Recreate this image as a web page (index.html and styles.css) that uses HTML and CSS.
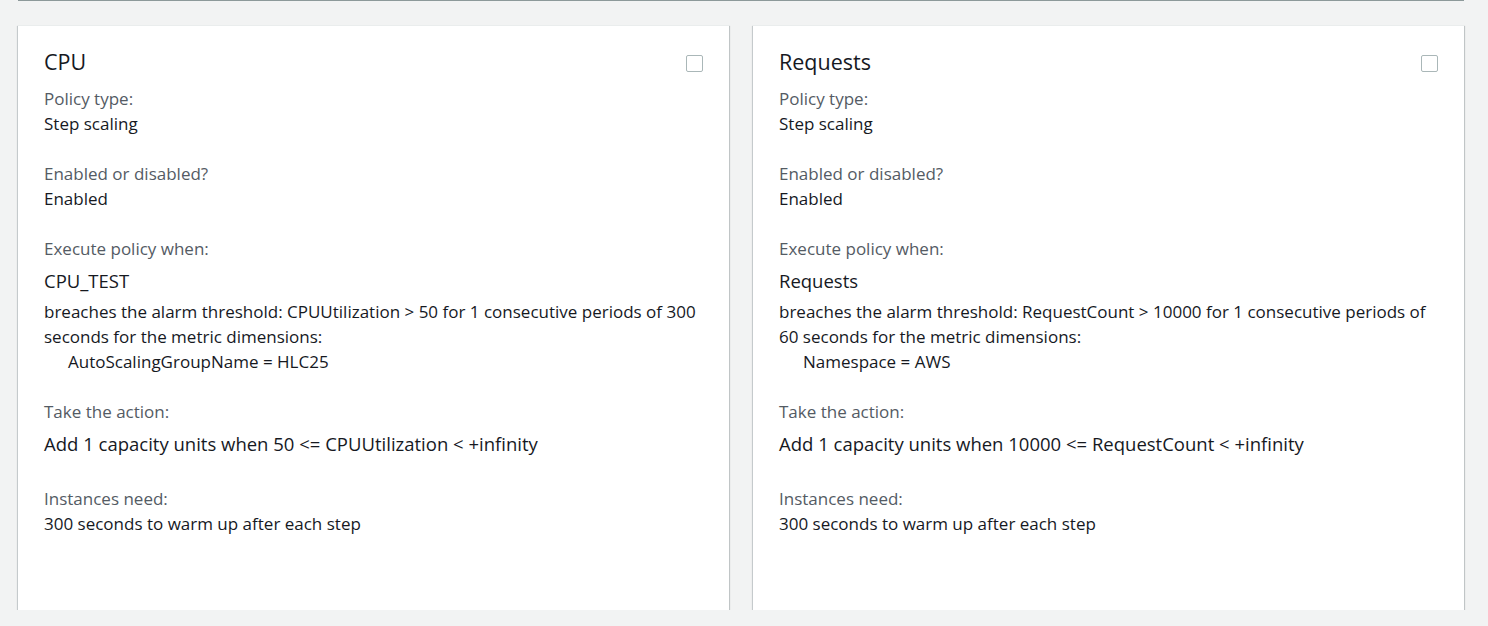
FILE: index.html
```html
<!DOCTYPE html>
<html lang="en">
<head>
<meta charset="utf-8">
<title>Scaling policies</title>
<link rel="stylesheet" href="styles.css">
</head>
<body>
<div class="page">
  <div class="prev-edge"></div>
  <div class="cards">
    <section class="card">
      <header class="card-head">
        <h2 class="card-title">CPU</h2>
        <span class="checkbox" role="checkbox" aria-checked="false"></span>
      </header>
      <div class="field">
        <div class="label">Policy type:</div>
        <div class="value">Step scaling</div>
      </div>
      <div class="field">
        <div class="label">Enabled or disabled?</div>
        <div class="value">Enabled</div>
      </div>
      <div class="field">
        <div class="label">Execute policy when:</div>
        <div class="alarm">CPU_TEST</div>
        <div class="desc">breaches the alarm threshold: CPUUtilization &gt; 50 for 1 consecutive periods of 300 seconds for the metric dimensions:
          <div class="dim">AutoScalingGroupName = HLC25</div>
        </div>
      </div>
      <div class="field">
        <div class="label">Take the action:</div>
        <div class="action">Add 1 capacity units when 50 &lt;= CPUUtilization &lt; +infinity</div>
      </div>
      <div class="field">
        <div class="label">Instances need:</div>
        <div class="value">300 seconds to warm up after each step</div>
      </div>
    </section>
    <section class="card">
      <header class="card-head">
        <h2 class="card-title">Requests</h2>
        <span class="checkbox" role="checkbox" aria-checked="false"></span>
      </header>
      <div class="field">
        <div class="label">Policy type:</div>
        <div class="value">Step scaling</div>
      </div>
      <div class="field">
        <div class="label">Enabled or disabled?</div>
        <div class="value">Enabled</div>
      </div>
      <div class="field">
        <div class="label">Execute policy when:</div>
        <div class="alarm">Requests</div>
        <div class="desc">breaches the alarm threshold: RequestCount &gt; 10000 for 1 consecutive periods of 60 seconds for the metric dimensions:
          <div class="dim">Namespace = AWS</div>
        </div>
      </div>
      <div class="field">
        <div class="label">Take the action:</div>
        <div class="action">Add 1 capacity units when 10000 &lt;= RequestCount &lt; +infinity</div>
      </div>
      <div class="field">
        <div class="label">Instances need:</div>
        <div class="value">300 seconds to warm up after each step</div>
      </div>
    </section>
  </div>
</div>
</body>
</html>
```
FILE: styles.css
```css
html, body {
  margin: 0;
  padding: 0;
  background: #f2f3f3;
}
body {
  font-family: "Open Sans", "Noto Sans", sans-serif;
  font-size: 17px;
  line-height: 25px;
  color: #16191f;
}
.page {
  padding: 0 24px 0 18px;
}
.prev-edge {
  height: 1px;
  background: #8d999a;
}
.cards {
  display: grid;
  grid-template-columns: 1fr 1fr;
  gap: 24px;
  margin-top: 24px;
}
.card {
  background: #ffffff;
  min-height: 585px;
  box-sizing: border-box;
  padding: 21px 26px 30px 26px;
  border-top: 1px solid #eaeded;
  box-shadow: 0 1px 1px 0 rgba(0, 28, 36, 0.4),
              1px 1px 1px 0 rgba(0, 28, 36, 0.15),
              -1px 1px 1px 0 rgba(0, 28, 36, 0.12);
}
.card-head {
  display: flex;
  justify-content: space-between;
  align-items: flex-start;
  margin-bottom: 9px;
}
.card-title {
  margin: 0;
  font-size: 21.5px;
  line-height: 30px;
  font-weight: 400;
  color: #16191f;
}
.checkbox {
  width: 17px;
  height: 17px;
  box-sizing: border-box;
  border: 1px solid #aab7b8;
  border-radius: 2px;
  background: #fff;
  margin-top: 8px;
}
.field {
  margin-bottom: 25px;
}
.label {
  color: #545b64;
}
.value {
  color: #16191f;
}
.alarm {
  font-size: 18.5px;
  line-height: 25px;
  margin-top: 7px;
}
.desc {
  margin-top: 6px;
}
.dim {
  padding-left: 24px;
}
.action {
  font-size: 18.5px;
  line-height: 25px;
  margin-top: 7px;
  margin-bottom: 30px;
}
```
